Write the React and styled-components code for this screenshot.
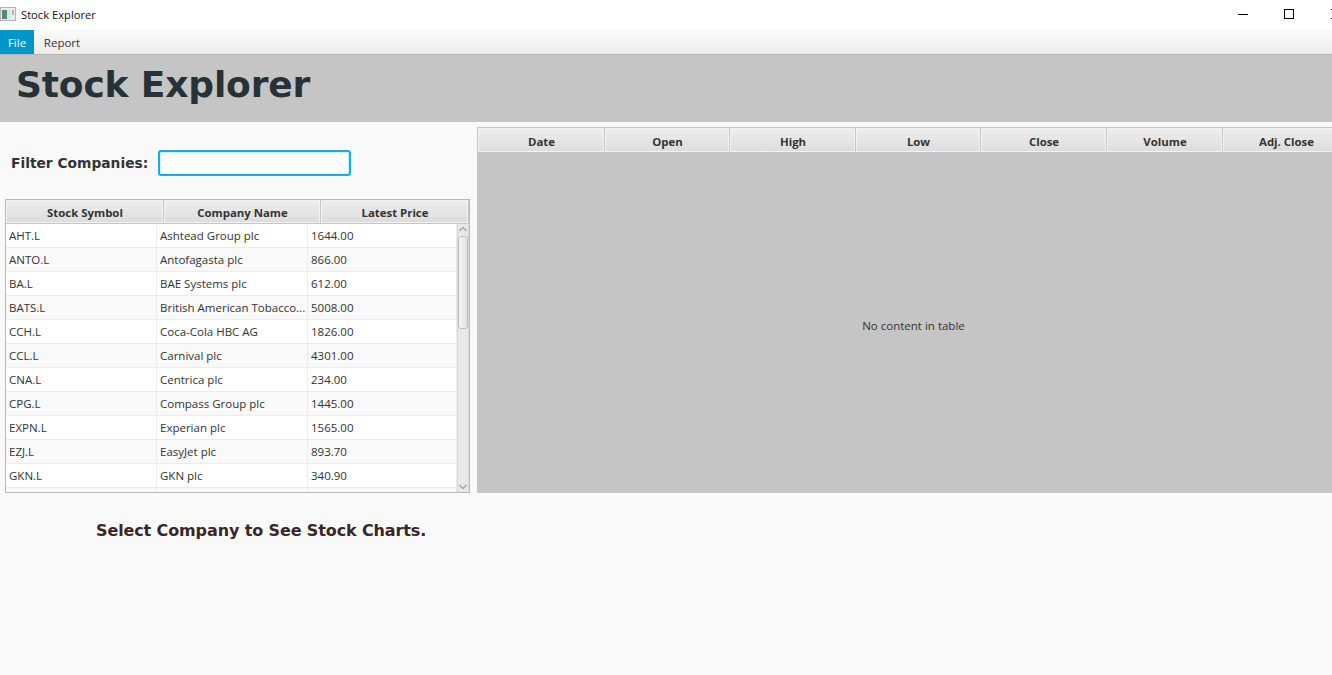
import React from 'react';
import styled, { createGlobalStyle } from 'styled-components';

const GlobalStyle = createGlobalStyle`
    html, body {
        margin: 0;
        padding: 0;
        width: 100%;
        height: 100%;
        overflow: hidden;
        background: #f9f9f9;
    }
    * { box-sizing: border-box; }
`;

const uiFont = `"Open Sans", "Noto Sans", "Liberation Sans", sans-serif`;
const boldFont = `"DejaVu Sans", Verdana, sans-serif`;

const Window = styled.div`
    width: 1332px;
    height: 675px;
    display: flex;
    flex-direction: column;
    overflow: hidden;
    font-family: ${uiFont};
    font-size: 11.5px;
    color: #333;
`;

const TitleBar = styled.div`
    height: 30px;
    flex: none;
    background: #fff;
    display: flex;
    align-items: center;
    color: #111;
    font-size: 11.2px;
`;

const AppIcon = styled.svg`
    width: 16px;
    height: 14px;
    margin-right: 5px;
    margin-top: -2px;
`;

const WindowTitle = styled.span`
    flex: 1;
    margin-top: -1px;
`;

const WindowButton = styled.svg`
    width: 12px;
    height: 12px;
    margin-top: -2px;
    flex: none;
    margin-left: ${p => p.$gap}px;
    margin-right: ${p => p.$right || 0}px;
`;

const MenuBar = styled.div`
    height: 25px;
    flex: none;
    display: flex;
    background: linear-gradient(#fafafa, #ececec);
    border-bottom: 1px solid #b5b5b5;
`;

const MenuItem = styled.div`
    width: ${p => p.$width}px;
    height: 24px;
    display: flex;
    align-items: center;
    justify-content: center;
    background: ${p => (p.$active ? '#0096c9' : 'transparent')};
    color: ${p => (p.$active ? '#fff' : '#333')};
`;

const Banner = styled.header`
    height: 67px;
    flex: none;
    background: #c5c5c5;
    padding: 6px 0 0 16px;
`;

const BannerTitle = styled.h1`
    margin: 0;
    font-family: ${boldFont};
    font-weight: 700;
    font-size: 36px;
    line-height: 47px;
    letter-spacing: -0.15px;
    color: #263238;
`;

const Content = styled.main`
    flex: 1;
    display: flex;
    min-height: 0;
`;

const LeftColumn = styled.section`
    width: 477px;
    flex: none;
    padding-left: 5px;
    display: flex;
    flex-direction: column;
`;

const FilterRow = styled.div`
    height: 77px;
    flex: none;
    display: flex;
    align-items: center;
    padding: 4px 0 0 6px;
`;

const FilterLabel = styled.label`
    font-family: ${boldFont};
    font-weight: 700;
    font-size: 13.8px;
    color: #333;
    width: 147px;
    flex: none;
    white-space: nowrap;
`;

const FilterInput = styled.div`
    width: 193px;
    height: 26px;
    background: #fff;
    border: 2px solid #0fb0e8;
    border-radius: 3px;
    box-shadow: inset 0 0 0 1px #d6f1fb;
`;

const CompanyTable = styled.div`
    width: 465px;
    height: 294px;
    border: 1px solid #b9b9b9;
    background: #fff;
    display: flex;
    flex-direction: column;
    overflow: hidden;
`;

const HeaderRow = styled.div`
    display: flex;
    flex: none;
    height: ${p => p.$height}px;
`;

const HeaderCell = styled.div`
    width: ${p => p.$width}px;
    flex: none;
    display: flex;
    align-items: center;
    justify-content: center;
    padding: 1px 0 0 1px;
    background: linear-gradient(#eeeeee, #dcdcdc);
    border-right: 1px solid #c6c6c6;
    border-bottom: 1px solid #c6c6c6;
    box-shadow: inset 0 0 0 1px #f3f3f3;
    font-weight: 700;
    font-size: 11.4px;
    color: #333;
    white-space: nowrap;
`;

const TableBody = styled.div`
    flex: 1;
    min-height: 0;
    display: flex;
`;

const Rows = styled.div`
    width: 451px;
    flex: none;
    overflow: hidden;
`;

const Row = styled.div`
    height: 24px;
    display: grid;
    grid-template-columns: 151px 151px 149px;
    background: ${p => (p.$odd ? '#f9f9f9' : '#fff')};
    border-bottom: 1px solid #ececec;
`;

const Cell = styled.div`
    padding-left: 3px;
    display: flex;
    align-items: center;
    overflow: hidden;
    white-space: nowrap;
    border-right: 1px solid #ececec;
`;

const ScrollBar = styled.div`
    width: 12px;
    flex: none;
    display: flex;
    flex-direction: column;
    align-items: center;
    background: #e8e8e8;
    border-left: 1px solid #d8d8d8;
    border-right: 1px solid #d8d8d8;
`;

const ScrollArrow = styled.svg`
    width: 10px;
    height: 12px;
    flex: none;
`;

const ScrollThumb = styled.div`
    width: 10px;
    height: 93px;
    flex: none;
    border: 1px solid #bcbcbc;
    border-radius: 3px;
    background: linear-gradient(90deg, #f4f4f4, #e2e2e2);
`;

const ScrollGap = styled.div`
    flex: 1;
`;

const Hint = styled.p`
    margin: 28px 0 0;
    padding-left: 91px;
    font-family: ${boldFont};
    font-weight: 700;
    font-size: 16px;
    line-height: 20px;
    letter-spacing: -0.12px;
    color: #3a2626;
    white-space: nowrap;
`;

const RightColumn = styled.section`
    flex: 1;
    min-width: 0;
    height: 366px;
    margin-top: 5px;
    background: #c5c5c5;
    padding-top: 1px;
    display: flex;
    flex-direction: column;
    overflow: hidden;
`;

const RightHeader = styled(HeaderRow)`
    padding-left: 1px;
    width: 900px;

    ${HeaderCell} {
        padding-top: 2px;
    }
`;

const EmptyMessage = styled.div`
    flex: 1;
    width: 873px;
    padding-top: 5px;
    display: flex;
    align-items: center;
    justify-content: center;
`;

const companyColumns = [
    { label: 'Stock Symbol', width: 158 },
    { label: 'Company Name', width: 157 },
    { label: 'Latest Price', width: 148 },
];

const historyColumns = [
    { label: 'Date', width: 127 },
    { label: 'Open', width: 125 },
    { label: 'High', width: 126 },
    { label: 'Low', width: 125 },
    { label: 'Close', width: 126 },
    { label: 'Volume', width: 116 },
    { label: 'Adj. Close', width: 127 },
];

const companies = [
    ['AHT.L', 'Ashtead Group plc', '1644.00'],
    ['ANTO.L', 'Antofagasta plc', '866.00'],
    ['BA.L', 'BAE Systems plc', '612.00'],
    ['BATS.L', 'British American Tobacco...', '5008.00'],
    ['CCH.L', 'Coca-Cola HBC AG', '1826.00'],
    ['CCL.L', 'Carnival plc', '4301.00'],
    ['CNA.L', 'Centrica plc', '234.00'],
    ['CPG.L', 'Compass Group plc', '1445.00'],
    ['EXPN.L', 'Experian plc', '1565.00'],
    ['EZJ.L', 'EasyJet plc', '893.70'],
    ['GKN.L', 'GKN plc', '340.90'],
    ['', '', ''],
];

export default function App() {
    return (
        <Window>
            <GlobalStyle />
            <TitleBar>
                <AppIcon viewBox="0 0 16 14">
                    <rect x="0.5" y="0.5" width="15" height="13" fill="#ededed" stroke="#b4b4b4" />
                    <rect x="2" y="3" width="5" height="9" fill="#4d8a80" />
                    <rect x="7" y="3" width="4" height="9" fill="#d6e6e2" />
                    <rect x="12" y="3" width="2" height="5" fill="#a4b4c2" />
                </AppIcon>
                <WindowTitle>Stock Explorer</WindowTitle>
                <WindowButton $gap={0} viewBox="0 0 12 12">
                    <path d="M1 6.5H11" stroke="#000" strokeWidth="1" />
                </WindowButton>
                <WindowButton $gap={34} viewBox="0 0 12 12">
                    <rect x="1.5" y="1.5" width="9" height="9" fill="none" stroke="#000" />
                </WindowButton>
                <WindowButton $gap={35} $right={-10} viewBox="0 0 12 12">
                    <path d="M1 1L11 11M11 1L1 11" stroke="#000" strokeWidth="1" />
                </WindowButton>
            </TitleBar>
            <MenuBar>
                <MenuItem $active $width={34}>File</MenuItem>
                <MenuItem $width={56}>Report</MenuItem>
            </MenuBar>
            <Banner>
                <BannerTitle>Stock Explorer</BannerTitle>
            </Banner>
            <Content>
                <LeftColumn>
                    <FilterRow>
                        <FilterLabel>Filter Companies:</FilterLabel>
                        <FilterInput />
                    </FilterRow>
                    <CompanyTable>
                        <HeaderRow $height={24}>
                            {companyColumns.map(col => (
                                <HeaderCell key={col.label} $width={col.width}>{col.label}</HeaderCell>
                            ))}
                        </HeaderRow>
                        <TableBody>
                            <Rows>
                                {companies.map((row, i) => (
                                    <Row key={i} $odd={i % 2 === 1}>
                                        {row.map((value, j) => <Cell key={j}>{value}</Cell>)}
                                    </Row>
                                ))}
                            </Rows>
                            <ScrollBar>
                                <ScrollArrow viewBox="0 0 10 12">
                                    <path d="M1.5 7L5 3.5L8.5 7" fill="none" stroke="#9c9c9c" strokeWidth="1.2" />
                                </ScrollArrow>
                                <ScrollThumb />
                                <ScrollGap />
                                <ScrollArrow viewBox="0 0 10 12">
                                    <path d="M1.5 5L5 8.5L8.5 5" fill="none" stroke="#9c9c9c" strokeWidth="1.2" />
                                </ScrollArrow>
                            </ScrollBar>
                        </TableBody>
                    </CompanyTable>
                    <Hint>Select Company to See Stock Charts.</Hint>
                </LeftColumn>
                <RightColumn>
                    <RightHeader $height={25}>
                        {historyColumns.map(col => (
                            <HeaderCell key={col.label} $width={col.width}>{col.label}</HeaderCell>
                        ))}
                    </RightHeader>
                    <EmptyMessage>No content in table</EmptyMessage>
                </RightColumn>
            </Content>
        </Window>
    );
}
